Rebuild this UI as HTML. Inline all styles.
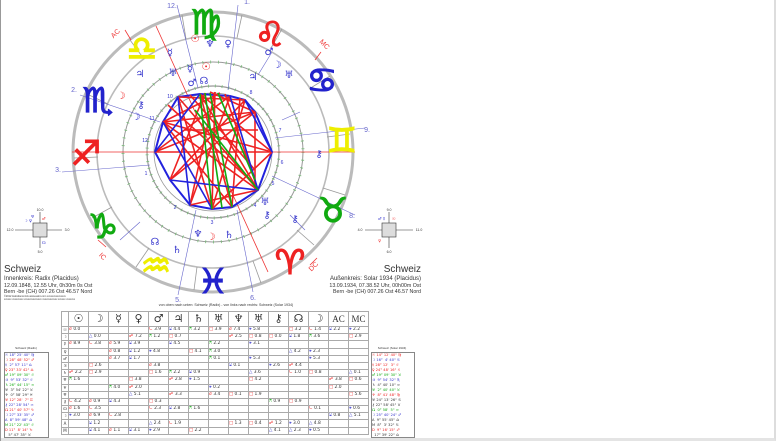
<!DOCTYPE html>
<html><head><meta charset="utf-8"><style>
body{margin:0;width:778px;height:444px;background:#fff;position:relative;overflow:hidden;font-family:"Liberation Sans","DejaVu Sans",sans-serif}
#frame{position:absolute;left:0;top:0;width:776px;height:441px;border-right:2px solid #ddd;border-bottom:3px solid #e4e4e4;box-sizing:border-box}
#lb{position:absolute;left:0;top:0;width:1px;height:441px;background:#999}
svg{position:absolute;left:0;top:0}
.sym{font-family:"DejaVu Sans",sans-serif}
table.asp{position:absolute;left:61px;top:311px;border-collapse:collapse;table-layout:fixed;width:307px;font-size:4.4px;font-family:"DejaVu Sans",sans-serif}
table.asp td{border:1px solid #aaa;height:6.2px;padding:0;white-space:nowrap;overflow:hidden;line-height:6px;color:#333}
table.asp td.l{font-size:4px;text-align:center}
table.asp tr.h td{height:14px;font-size:11px;text-align:center;padding:0}
.r{color:#e22}.b{color:#33c}.g{color:#1a1}
.side{position:absolute;border:1px solid #888;font-size:3.6px;line-height:5px;font-family:"DejaVu Sans",sans-serif;overflow:hidden;box-sizing:border-box}
.side div{white-space:nowrap}
</style></head><body>
<div id="frame"></div><div id="lb"></div>
<svg width="778" height="444" viewBox="0 0 778 444">
<g fill="none">
<circle cx="213" cy="152" r="140" stroke="#bbb" stroke-width="3"/>
<circle cx="213" cy="152" r="116" stroke="#bbb" stroke-width="1.6"/>
<circle cx="213" cy="152" r="90" stroke="#999" stroke-width="1"/>
<circle cx="213" cy="152" r="90" stroke="#7b7" stroke-width="3" stroke-dasharray="0.8 7"/>
<circle cx="213" cy="152" r="66" stroke="#999" stroke-width="1.2"/>
<circle cx="213" cy="152" r="66" stroke="#7b7" stroke-width="3" stroke-dasharray="0.8 6"/>
<circle cx="213" cy="152" r="59" stroke="#999" stroke-width="0.8"/>
</g>
<g stroke="#999" stroke-width="0.8">
<line x1="237" y1="38" x2="242" y2="15"/><line x1="271" y1="48" x2="282" y2="29"/><line x1="309" y1="89" x2="330" y2="76"/><line x1="327" y1="137" x2="350" y2="134"/><line x1="323" y1="188" x2="345" y2="195"/><line x1="297" y1="230" x2="314" y2="245"/><line x1="253" y1="261" x2="261" y2="283"/><line x1="197" y1="267" x2="194" y2="290"/><line x1="149" y1="248" x2="136" y2="267"/><line x1="112" y1="207" x2="92" y2="218"/><line x1="98" y1="157" x2="74" y2="158"/><line x1="108" y1="104" x2="87" y2="94"/><line x1="144" y1="59" x2="130" y2="40"/><line x1="186" y1="39" x2="182" y2="15"/>
</g>
<g stroke="#66c" stroke-width="0.6">
<line x1="177" y1="5" x2="198" y2="88"/><line x1="238" y1="5" x2="228" y2="90"/><line x1="80" y1="95" x2="160" y2="122"/><line x1="62" y1="172" x2="150" y2="165"/><line x1="178" y1="295" x2="196" y2="210"/><line x1="253" y1="292" x2="237" y2="210"/><line x1="355" y1="215" x2="272" y2="176"/><line x1="365" y1="128" x2="275" y2="138"/><line x1="258" y1="75" x2="272" y2="52"/><line x1="140" y1="222" x2="120" y2="240"/><line x1="290" y1="215" x2="305" y2="230"/><line x1="282" y1="120" x2="300" y2="112"/>
</g>
<g stroke="#e33" stroke-width="0.8">
<line x1="72" y1="152" x2="355" y2="152"/><line x1="156" y1="26" x2="268" y2="272"/>
<line x1="125" y1="30" x2="131" y2="40"/><line x1="315" y1="60" x2="321" y2="52"/><line x1="98" y1="240" x2="106" y2="247"/><line x1="317" y1="258" x2="310" y2="265"/>
</g>
<g stroke-width="1.6" fill="none">
<polyline stroke="#22d" stroke-width="2" points="155,152 163,122 178,97 200,94 230,96 245,100 255,112 272,152 258,190 232,207 212,209 190,205 170,180 155,152"/>
<g stroke="#e22">
<line x1="155" y1="152" x2="272" y2="152"/><line x1="163" y1="122" x2="258" y2="190"/><line x1="178" y1="97" x2="212" y2="209"/><line x1="200" y1="94" x2="232" y2="207"/><line x1="230" y1="96" x2="190" y2="205"/><line x1="245" y1="100" x2="170" y2="180"/><line x1="255" y1="112" x2="155" y2="152"/><line x1="163" y1="122" x2="255" y2="112"/><line x1="178" y1="97" x2="258" y2="190"/><line x1="200" y1="94" x2="258" y2="190"/><line x1="215" y1="92" x2="212" y2="209"/><line x1="210" y1="92" x2="255" y2="112"/><line x1="220" y1="93" x2="163" y2="122"/><line x1="190" y1="95" x2="255" y2="170"/><line x1="163" y1="122" x2="232" y2="207"/><line x1="245" y1="100" x2="212" y2="209"/><line x1="255" y1="112" x2="255" y2="190"/><line x1="155" y1="152" x2="230" y2="96"/><line x1="272" y1="152" x2="200" y2="94"/><line x1="178" y1="97" x2="245" y2="100"/><line x1="163" y1="122" x2="272" y2="152"/><line x1="190" y1="205" x2="215" y2="92"/><line x1="225" y1="94" x2="258" y2="190"/><line x1="205" y1="93" x2="170" y2="180"/><line x1="185" y1="130" x2="258" y2="130"/><line x1="168" y1="105" x2="250" y2="180"/><line x1="232" y1="207" x2="240" y2="98"/><line x1="212" y1="209" x2="272" y2="152"/><line x1="170" y1="180" x2="255" y2="112"/><line x1="190" y1="205" x2="258" y2="190"/>
</g>
<g stroke="#22d"><line x1="163" y1="122" x2="212" y2="209"/><line x1="178" y1="97" x2="190" y2="205"/><line x1="245" y1="100" x2="272" y2="152"/><line x1="230" y1="96" x2="258" y2="190"/><line x1="155" y1="152" x2="200" y2="94"/><line x1="170" y1="180" x2="258" y2="190"/></g>
<g stroke="#1a1"><line x1="210" y1="93" x2="232" y2="207"/><line x1="218" y1="93" x2="255" y2="180"/><line x1="200" y1="94" x2="212" y2="209"/><line x1="195" y1="110" x2="258" y2="190"/><line x1="205" y1="93" x2="222" y2="208"/></g>
</g>
<g class="sym" font-size="34" text-anchor="middle" font-weight="bold" stroke-width="1.2">
<text x="206" y="34" fill="#1a1" stroke="#1a1">♍</text>
<text x="270" y="46" fill="#e22" stroke="#e22">♌</text>
<text x="322" y="92" fill="#22c" stroke="#22c">♋</text>
<text x="342" y="152" fill="#ee0" stroke="#ee0">♊</text>
<text x="333" y="222" fill="#1a1" stroke="#1a1">♉</text>
<text x="290" y="274" fill="#e22" stroke="#e22">♈</text>
<text x="213" y="293" fill="#22c" stroke="#22c">♓</text>
<text x="156" y="277" fill="#ee0" stroke="#ee0">♒</text>
<text x="103" y="238" fill="#1a1" stroke="#1a1">♑</text>
<text x="86" y="165" fill="#e22" stroke="#e22">♐</text>
<text x="98" y="112" fill="#22c" stroke="#22c">♏</text>
<text x="142" y="60" fill="#ee0" stroke="#ee0">♎</text>
</g>
<g class="sym" font-size="10" text-anchor="middle">
<text x="195" y="42" fill="#e22">☉</text><text x="210" y="47" fill="#33c">♆</text><text x="228" y="47" fill="#33c">♀</text>
<text x="170" y="56" fill="#33c">☿</text><text x="269" y="55" fill="#33c">♂</text><text x="277" y="68" fill="#22c">☽</text><text x="289" y="78" fill="#33c">♅</text>
<text x="140" y="77" fill="#33c">♃</text><text x="121" y="99" fill="#e22">☽</text><text x="141" y="108" fill="#33c">⚷</text><text x="136" y="120" fill="#22c">☽</text>
<text x="319" y="157" fill="#33c">⚷</text><text x="265" y="205" fill="#33c">♅</text><text x="267" y="218" fill="#33c">⚷</text><text x="295" y="222" fill="#33c">⚷</text>
<text x="198" y="237" fill="#33c">♆</text><text x="211" y="240" fill="#e22">☽</text><text x="229" y="238" fill="#33c">♄</text><text x="155" y="245" fill="#33c">☊</text><text x="177" y="253" fill="#33c">♄</text>
<text x="173" y="76" fill="#33c">♅</text><text x="190" y="72" fill="#33c">☿</text><text x="206" y="70" fill="#e22">☉</text><text x="253" y="80" fill="#33c">♃</text><text x="192" y="86" fill="#33c">♂</text><text x="204" y="84" fill="#33c">☊</text>
</g>
<g font-size="5" fill="#33c" text-anchor="middle">
<text x="170" y="98">10</text><text x="152" y="120">11</text><text x="145" y="142">12</text><text x="146" y="175">1</text><text x="175" y="209">2</text><text x="212" y="224">3</text><text x="255" y="207">4</text><text x="273" y="185">5</text><text x="282" y="164">6</text><text x="280" y="132">7</text><text x="251" y="94">8</text>
</g>
<g font-size="7" fill="#66c" text-anchor="middle">
<text x="172" y="8">12.</text><text x="247" y="4">1.</text><text x="74" y="92">2.</text><text x="58" y="172">3.</text><text x="178" y="302">5.</text><text x="253" y="300">6.</text><text x="352" y="218">8.</text><text x="367" y="132">9.</text>
</g>
<g font-size="7" fill="#e33" text-anchor="middle">
<text x="117" y="35" transform="rotate(-45 117 35)">AC</text><text x="323" y="46" transform="rotate(45 323 46)">MC</text><text x="101" y="258" transform="rotate(45 101 258)">IC</text><text x="315" y="268" transform="rotate(-45 315 268)">DC</text>
</g>
<g stroke="#333" stroke-width="0.6" fill="none">
<line x1="15" y1="230" x2="62" y2="230"/><line x1="40" y1="212" x2="40" y2="248"/><rect x="33" y="223" width="14" height="14" fill="#ddd"/>
<line x1="365" y1="230" x2="413" y2="230"/><line x1="389" y1="212" x2="389" y2="248"/><rect x="382" y="223" width="14" height="14" fill="#ddd"/>
</g>
<g font-size="3.5" fill="#333" text-anchor="middle">
<text x="40" y="211">10.0</text><text x="40" y="253">5.0</text><text x="10" y="231">12.0</text><text x="67" y="231">3.0</text>
<text x="389" y="211">9.0</text><text x="389" y="253">6.0</text><text x="360" y="231">4.0</text><text x="419" y="231">11.0</text>
</g>
<g font-size="4" class="sym"><text x="24" y="222" fill="#22c">☽ ♀</text><text x="31" y="218" fill="#33c">♅</text><text x="42" y="220" fill="#e22">♂</text><text x="42" y="244" fill="#33c">☊</text><text x="378" y="220" fill="#33c">♂ ☿</text><text x="392" y="220" fill="#e22">☉</text><text x="378" y="242" fill="#e22">♀</text></g>
<g fill="#333">
<text x="4" y="272" font-size="10">Schweiz</text>
<text x="4" y="280" font-size="6">Innenkreis: Radix (Placidus)</text>
<text x="4" y="287" font-size="5.3">12.09.1848, 12.55 Uhr,  0h30m 0s Ost</text>
<text x="4" y="293" font-size="5.3">Bern -be (CH) 007.26 Ost 46.57 Nord</text>
<text x="4" y="297" font-size="2.5">©2012 Astrodienst AG www.astro.com  xxxxxxxxxxxxxxx</text>
<text x="4" y="300" font-size="2.5">xxxxxx xxxxxxxxx xxxxxxxxxxxxxx xxxxxxxxxxxx xxxxxx xxxxxxx</text>
<text x="421" y="272" font-size="10" text-anchor="end">Schweiz</text>
<text x="421" y="280" font-size="6" text-anchor="end">Außenkreis: Solar 1934 (Placidus)</text>
<text x="421" y="287" font-size="5.3" text-anchor="end">13.09.1934, 07.38.52 Uhr, 00h00m Ost</text>
<text x="421" y="293" font-size="5.3" text-anchor="end">Bern -be (CH) 007.26 Ost 46.57 Nord</text>
<text x="226" y="306" font-size="3.6" text-anchor="middle">von oben nach unten: Schweiz (Radix) - von links nach rechts: Schweiz (Solar 1934)</text>
<text x="26" y="349" font-size="3" text-anchor="middle">Schweiz (Radix)</text>
<text x="392" y="349" font-size="3" text-anchor="middle">Schweiz (Solar 1934)</text>
</g>
</svg>

<table class="asp">
<colgroup><col style="width:7px"><col span="15" style="width:20px"></colgroup>
<tr class="h"><td class="l"></td><td class="r">☉</td><td class="r">☽</td><td class="b">☿</td><td class="b">♀</td><td class="b">♂</td><td class="b">♃</td><td class="b">♄</td><td class="b">♅</td><td class="b">♆</td><td class="b">♅</td><td class="b">⚷</td><td class="b">☊</td><td class="b">☽</td><td class="r" style="font-family:'Liberation Serif',serif;font-size:9px">AC</td><td class="r" style="font-family:'Liberation Serif',serif;font-size:9px">MC</td></tr>
<tr><td class="l r">☉</td><td><span class="r">☌</span> 0.0</td><td></td><td></td><td></td><td><span class="r">∟</span> 3.9</td><td><span class="b">⚺</span> 4.4</td><td><span class="g">⚻</span> 3.2</td><td><span class="r">□</span> 3.9</td><td><span class="r">☌</span> 7.4</td><td><span class="b">⚹</span> 5.8</td><td></td><td><span class="r">□</span> 3.2</td><td><span class="r">∟</span> 1.4</td><td><span class="b">⚺</span> 2.2</td><td><span class="b">⚹</span> 2.2</td></tr>
<tr><td class="l r">☽</td><td></td><td><span class="b">△</span> 0.0</td><td></td><td><span class="r">☍</span> 7.2</td><td><span class="g">⚻</span> 1.2</td><td><span class="r">□</span> 0.7</td><td></td><td></td><td><span class="r">☍</span> 2.5</td><td><span class="r">□</span> 0.8</td><td><span class="r">□</span> 0.0</td><td><span class="b">⚺</span> 1.8</td><td><span class="g">⚻</span> 3.6</td><td></td><td><span class="r">□</span> 2.9</td></tr>
<tr><td class="l b">☿</td><td><span class="r">☌</span> 8.9</td><td><span class="r">∟</span> 3.8</td><td><span class="r">☌</span> 5.9</td><td><span class="b">⚺</span> 3.9</td><td></td><td><span class="b">⚺</span> 4.5</td><td></td><td><span class="g">⚻</span> 2.2</td><td></td><td><span class="b">⚹</span> 3.1</td><td></td><td></td><td></td><td></td><td></td></tr>
<tr><td class="l b">♀</td><td></td><td></td><td><span class="r">☌</span> 0.8</td><td><span class="b">⚺</span> 1.2</td><td><span class="b">⚹</span> 4.8</td><td></td><td><span class="r">□</span> 4.1</td><td><span class="g">⚻</span> 3.0</td><td></td><td></td><td></td><td><span class="b">△</span> 4.2</td><td><span class="b">⚹</span> 2.3</td><td></td><td></td></tr>
<tr><td class="l b">♂</td><td></td><td></td><td><span class="r">☌</span> 3.7</td><td><span class="b">⚺</span> 1.7</td><td></td><td></td><td></td><td><span class="g">⚻</span> 0.1</td><td></td><td><span class="b">⚹</span> 5.3</td><td></td><td></td><td><span class="b">⚹</span> 5.3</td><td></td><td></td></tr>
<tr><td class="l b">♃</td><td></td><td><span class="r">□</span> 2.6</td><td></td><td></td><td><span class="r">☌</span> 3.8</td><td></td><td></td><td></td><td><span class="b">⚺</span> 0.1</td><td></td><td><span class="b">⚹</span> 2.6</td><td><span class="r">☍</span> 4.4</td><td></td><td></td><td></td></tr>
<tr><td class="l b">♄</td><td><span class="r">☍</span> 2.2</td><td><span class="r">□</span> 2.9</td><td></td><td></td><td><span class="r">□</span> 1.6</td><td><span class="g">⚻</span> 2.2</td><td><span class="b">⚺</span> 0.9</td><td></td><td></td><td><span class="b">△</span> 3.6</td><td></td><td><span class="r">∟</span> 1.0</td><td><span class="r">□</span> 0.8</td><td></td><td><span class="b">△</span> 0.1</td></tr>
<tr><td class="l b">♅</td><td><span class="g">⚻</span> 1.6</td><td></td><td></td><td><span class="r">□</span> 3.8</td><td></td><td><span class="r">☍</span> 2.8</td><td><span class="b">⚹</span> 1.5</td><td></td><td></td><td><span class="r">□</span> 4.2</td><td></td><td></td><td></td><td><span class="r">☍</span> 3.8</td><td><span class="r">□</span> 0.6</td></tr>
<tr><td class="l b">♆</td><td></td><td></td><td><span class="g">⚻</span> 4.0</td><td><span class="r">☍</span> 2.0</td><td></td><td></td><td></td><td><span class="b">⚹</span> 0.2</td><td></td><td></td><td></td><td></td><td></td><td><span class="r">□</span> 2.0</td><td></td></tr>
<tr><td class="l b">♅</td><td></td><td></td><td></td><td><span class="b">△</span> 5.1</td><td></td><td><span class="r">☍</span> 3.3</td><td></td><td><span class="r">☌</span> 3.4</td><td><span class="r">□</span> 0.1</td><td><span class="r">□</span> 1.9</td><td></td><td></td><td></td><td></td><td><span class="r">□</span> 5.6</td></tr>
<tr><td class="l b">⚷</td><td><span class="r">∟</span> 4.2</td><td><span class="r">☌</span> 0.9</td><td><span class="b">⚺</span> 4.3</td><td></td><td><span class="r">□</span> 0.3</td><td></td><td></td><td></td><td></td><td></td><td><span class="g">⚻</span> 0.9</td><td><span class="r">□</span> 0.9</td><td></td><td></td><td></td></tr>
<tr><td class="l b">☊</td><td><span class="r">☌</span> 1.6</td><td><span class="r">∟</span> 3.5</td><td></td><td></td><td><span class="r">∟</span> 2.3</td><td><span class="b">⚺</span> 2.8</td><td><span class="g">⚻</span> 1.6</td><td></td><td></td><td></td><td></td><td></td><td><span class="r">∟</span> 0.1</td><td></td><td><span class="b">⚹</span> 0.6</td></tr>
<tr><td class="l b">☽</td><td><span class="b">⚹</span> 3.0</td><td><span class="r">☌</span> 6.9</td><td><span class="r">∟</span> 2.8</td><td></td><td></td><td></td><td></td><td></td><td></td><td></td><td></td><td></td><td></td><td><span class="b">⚺</span> 0.8</td><td><span class="b">△</span> 5.1</td></tr>
<tr><td class="l r">A</td><td></td><td><span class="b">⚺</span> 1.2</td><td></td><td></td><td><span class="b">△</span> 2.4</td><td><span class="r">∟</span> 1.9</td><td></td><td></td><td><span class="r">□</span> 1.3</td><td><span class="r">□</span> 0.4</td><td><span class="r">☍</span> 1.2</td><td><span class="b">⚹</span> 3.0</td><td><span class="b">△</span> 4.8</td><td></td><td></td></tr>
<tr><td class="l r">M</td><td></td><td><span class="b">⚺</span> 4.1</td><td><span class="r">☌</span> 1.1</td><td><span class="b">⚺</span> 3.1</td><td><span class="b">⚹</span> 2.9</td><td></td><td><span class="r">□</span> 2.2</td><td></td><td></td><td></td><td><span class="b">△</span> 4.1</td><td><span class="b">△</span> 2.3</td><td><span class="b">⚹</span> 0.5</td><td></td><td></td></tr>
</table>

<div class="side" style="left:4px;top:352px;width:45px;height:86px">
<div class="b">☉ 18° 25' 40" ♍</div><div class="r">☽ 28° 48' 52" ♐</div><div class="b">☿ &nbsp;2° 57' 11" ♎</div><div class="r">♀ 23° 33' 42" ♎</div>
<div class="g">♂ 19° 09' 30" ♌</div><div class="b">♃ &nbsp;9° 53' 32" ♌</div><div class="g">♄ 26° 44' 15" ♒</div><div style="color:#333">♅ &nbsp;3° 54' 22" ♉</div><div style="color:#333">♆ &nbsp;0° 58' 29" ♓</div>
<div class="r">♅ 12° 28' &nbsp;7" ♊</div><div class="b">⚷ 22° 28' 54" ♒</div><div class="r">☊ 21° 40' 57" ♑</div><div class="b">☽ 27° 33' 35" ♐</div><div class="b">A &nbsp;8° 59' 48" ♎</div><div class="g">M 21° 22' 43" ♌</div><div class="r">D 11° &nbsp;8' 14" ♑</div><div style="color:#333">&nbsp;&nbsp; 5° 47' 35" ♉</div>
</div>
<div class="side" style="left:371px;top:352px;width:44px;height:86px">
<div class="r">☉ 14° 12' 40" ♍</div><div class="b">☽ 16° &nbsp;4' 40" ♋</div><div class="r">☿ 28° 12' &nbsp;3" ♌</div><div class="r">♀ 24° 48' 16" ♌</div>
<div class="g">♂ 19° 09' 30" ♉</div><div class="b">♃ &nbsp;9° 54' 32" ♏</div><div style="color:#333">♄ &nbsp;4° 40' 10" ♒</div><div class="g">♅ &nbsp;2° 40' 40" ♉</div><div class="r">♆ &nbsp;8° 41' 48" ♍</div>
<div style="color:#333">♅ 24° 13' 26" ♋</div><div style="color:#333">⚷ 22° 58' 45" ♉</div><div class="g">☊ &nbsp;0° 58' &nbsp;5" ♒</div><div class="b">☽ 25° 40' 24" ♐</div><div style="color:#333">A &nbsp;9° 55' 45" ♎</div><div style="color:#333">M &nbsp;8° &nbsp;3' 32" ♋</div><div class="r">D &nbsp;9° 16' 15" ♐</div><div style="color:#333">&nbsp;&nbsp;17° 39' 22" ♎</div>
</div>
</body></html>
